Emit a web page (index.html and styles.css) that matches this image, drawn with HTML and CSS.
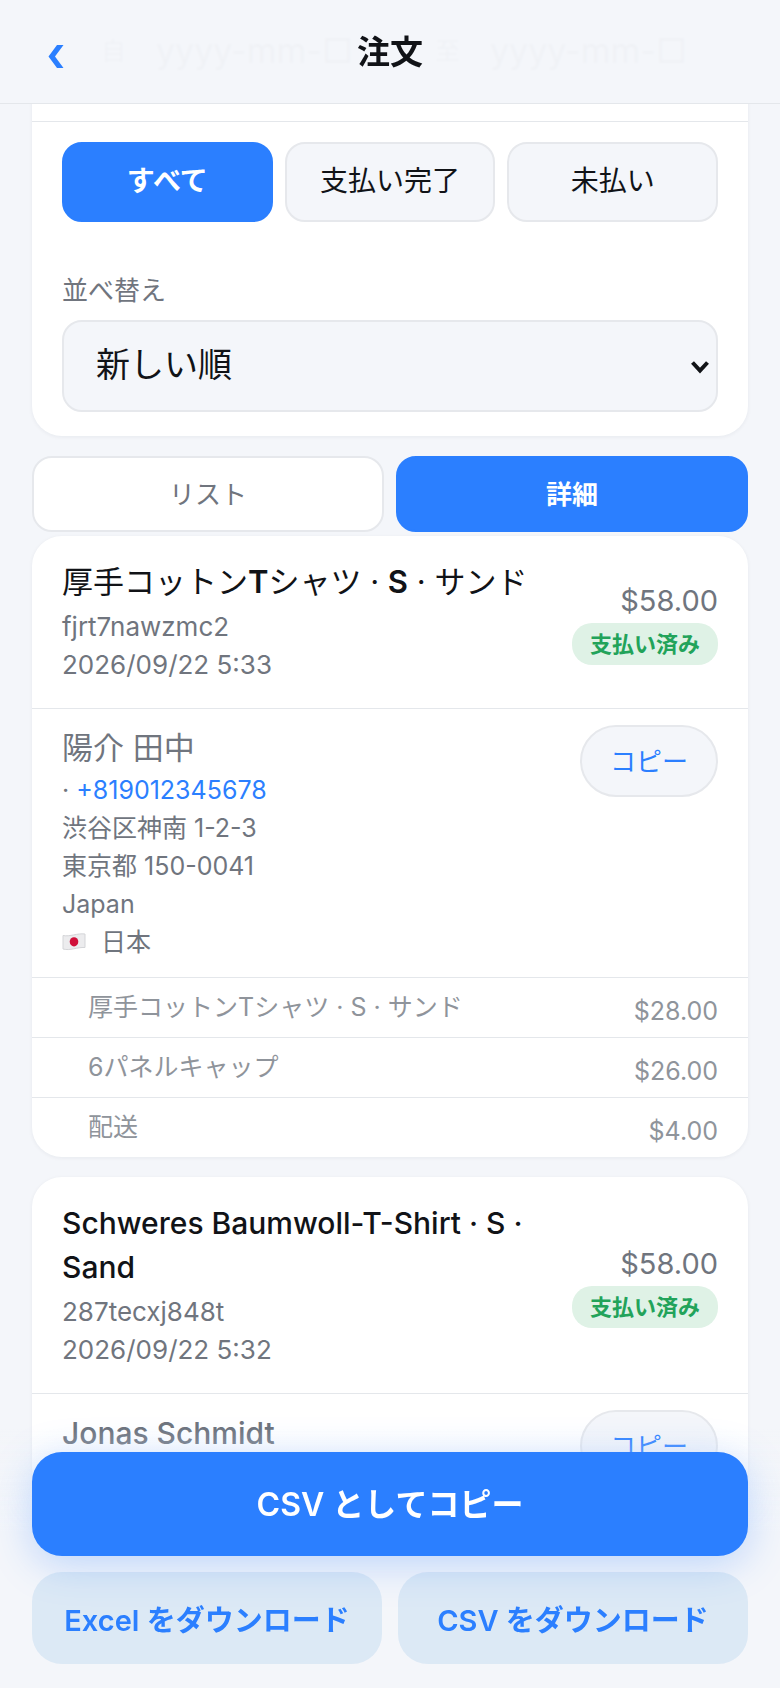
FILE: index.html
```html
<!DOCTYPE html>
<html lang="ja">
<head>
  <meta charset="UTF-8">
  <title>注文</title>
  <meta name="viewport" content="width=device-width, initial-scale=1.0">
  <link rel="stylesheet" href="styles.css">
</head>
<body>

<header class="topbar">
  <button type="button" class="back" aria-label="戻る">
    <svg width="16" height="24" viewBox="0 0 16 24"><path d="M9 0H15.5L7 11.5L15.5 23H9L0.5 11.5Z" fill="currentColor"/></svg>
  </button>
  <h1>注文</h1>
</header>

<main class="page">

  <section class="card filters">
    <div class="date-row">
      <label for="from">自</label>
      <input type="text" id="from" placeholder="yyyy-mm-□">
      <label for="to">至</label>
      <input type="text" id="to" placeholder="yyyy-mm-□">
    </div>
    <div class="filter-body">
      <div class="segments">
        <button type="button" class="segment active">すべて</button>
        <button type="button" class="segment">支払い完了</button>
        <button type="button" class="segment">未払い</button>
      </div>
      <label class="sort-label" for="sort">並べ替え</label>
      <div class="select-wrap">
        <select id="sort">
          <option>新しい順</option>
          <option>古い順</option>
        </select>
        <svg class="chevron" width="20" height="14" viewBox="0 0 20 14"><path d="M2.5 2.5L10 10.5L17.5 2.5" fill="none" stroke="#111317" stroke-width="4"/></svg>
      </div>
    </div>
  </section>

  <div class="tabs">
    <button type="button" class="tab">リスト</button>
    <button type="button" class="tab active">詳細</button>
  </div>

  <article class="card order">
    <div class="order-head">
      <div class="order-info">
        <h2>厚手コットン<b>T</b>シャツ · <b>S</b> · サンド</h2>
        <p>fjrt7nawzmc2</p>
        <p>2026/09/22 5:33</p>
      </div>
      <div class="order-total">
        <span class="price">$58.00</span>
        <span class="badge">支払い済み</span>
      </div>
    </div>
    <div class="customer">
      <div class="address">
        <h3>陽介 田中</h3>
        <p>· <a href="tel:+819012345678">+819012345678</a></p>
        <p>渋谷区神南 1-2-3</p>
        <p>東京都 150-0041</p>
        <p>Japan</p>
        <p class="country">
          <svg width="24" height="18" viewBox="0 0 24 18">
            <path d="M1 2.5C8 4 15 0 23 1V14.5C15 14 8 18 1 16Z" fill="#ececee" stroke="#d4d5d8" stroke-width="1"/>
            <ellipse cx="12" cy="8.8" rx="4.3" ry="4.6" fill="#d0103a"/>
          </svg>
          日本
        </p>
      </div>
      <button type="button" class="copy">コピー</button>
    </div>
    <ul class="items">
      <li><span>厚手コットンTシャツ · S · サンド</span><span class="item-price">$28.00</span></li>
      <li><span>6パネルキャップ</span><span class="item-price">$26.00</span></li>
      <li><span>配送</span><span class="item-price">$4.00</span></li>
    </ul>
  </article>

  <article class="card order">
    <div class="order-head">
      <div class="order-info">
        <h2 lang="de">Schweres Baumwoll-T-Shirt · S · Sand</h2>
        <p>287tecxj848t</p>
        <p>2026/09/22 5:32</p>
      </div>
      <div class="order-total">
        <span class="price">$58.00</span>
        <span class="badge">支払い済み</span>
      </div>
    </div>
    <div class="customer">
      <div class="address">
        <h3 lang="de">Jonas Schmidt</h3>
      </div>
      <button type="button" class="copy">コピー</button>
    </div>
  </article>

</main>

<footer class="actions">
  <button type="button" class="btn btn-primary">CSV としてコピー</button>
  <div class="btn-row">
    <button type="button" class="btn btn-soft">Excel をダウンロード</button>
    <button type="button" class="btn btn-soft">CSV をダウンロード</button>
  </div>
</footer>

</body>
</html>
```
FILE: styles.css
```css
* { box-sizing: border-box; }

body {
  margin: 0;
  background: #f4f6fa;
  color: #111317;
  font-family: Inter, "Noto Sans CJK JP", sans-serif;
  font-size: 25px;
  line-height: 38px;
}

h1, h2, h3, p, ul { margin: 0; padding: 0; }

button, input, select {
  font-family: inherit;
  color: inherit;
}

button { cursor: pointer; }

/* Header */
.topbar {
  position: fixed;
  top: 0;
  left: 0;
  right: 0;
  z-index: 10;
  display: grid;
  grid-template-columns: 60px 1fr 60px;
  align-items: center;
  height: 104px;
  padding: 0 24px;
  background: rgba(244, 246, 250, 0.97);
  backdrop-filter: blur(1px);
  border-bottom: 1px solid #e4e7eb;
}

.topbar h1 {
  font-size: 33px;
  font-weight: 600;
  text-align: center;
}

.back {
  display: flex;
  padding: 10px 20px 0 24px;
  border: none;
  background: none;
  color: #2b7fff;
}

.page { padding: 0 32px 240px; }

.card {
  background: #fff;
  border-radius: 30px;
  box-shadow: 0 1px 4px rgba(20, 30, 50, 0.06);
  overflow: hidden;
}

/* Filters */
.filters { border-radius: 0 0 30px 30px; }

.date-row {
  display: grid;
  grid-template-columns: 64px 1fr 64px 1fr;
  align-items: center;
  gap: 12px;
  height: 122px;
  padding: 0 30px 20px;
  border-bottom: 1px solid #e4e7eb;
  color: #70757e;
}

.date-row label { text-align: right; }

.date-row input {
  min-width: 0;
  height: 92px;
  padding: 0 16px;
  border: 2px solid #e6e8ec;
  border-radius: 20px;
  background: #f3f5fa;
  font-size: 34px;
}

.filter-body { padding: 20px 30px 24px; }

.segments {
  display: grid;
  grid-template-columns: repeat(3, 1fr);
  gap: 12px;
}

.segment, .tab {
  padding: 0 0 6px;
  border: 2px solid #e6e8ec;
  border-radius: 20px;
  background: #f4f6fa;
}

.segment {
  height: 80px;
  font-size: 28px;
}

.segment.active, .tab.active {
  border-color: #2b7fff;
  background: #2b7fff;
  color: #fff;
  font-weight: 600;
}

.sort-label {
  display: block;
  margin: 50px 0 10px;
  font-size: 26px;
  color: #70757e;
}

.select-wrap { position: relative; }

.select-wrap select {
  appearance: none;
  display: block;
  width: 100%;
  height: 92px;
  padding: 0 32px 4px;
  border: 2px solid #e6e8ec;
  border-radius: 20px;
  background: #f4f6fa;
  font-size: 34px;
}

.chevron {
  position: absolute;
  top: 40px;
  right: 8px;
  pointer-events: none;
}

/* List / detail switch */
.tabs {
  display: grid;
  grid-template-columns: 1fr 1fr;
  gap: 12px;
  margin: 20px 0 4px;
}

.tab {
  height: 76px;
  padding: 0 0 4px;
  background: #fff;
  font-size: 26px;
  color: #70757e;
}

/* Orders */
.order { margin-bottom: 20px; }

.order-head {
  display: flex;
  align-items: center;
  justify-content: space-between;
  gap: 40px;
  padding: 24px 30px;
  color: #70757e;
}

.order-info h2 {
  margin-bottom: 4px;
  font-size: 31px;
  line-height: 44px;
  font-weight: 400;
  color: #111317;
}

.order-info b { font-weight: 600; }

.order-info p { font-size: 26px; }

.order-info h2:lang(de), .address h3:lang(de) {
  font-size: 30px;
  font-weight: 500;
}

.order-total {
  display: flex;
  flex-direction: column;
  align-items: flex-end;
  flex-shrink: 0;
}

.price {
  font-size: 29px;
  line-height: 44px;
}

.badge {
  padding: 0 18px;
  border-radius: 20px;
  background: #dff2e6;
  color: #22a35a;
  font-size: 22px;
  line-height: 42px;
  font-weight: 600;
}

.customer {
  display: flex;
  align-items: flex-start;
  justify-content: space-between;
  padding: 16px 30px;
  border-top: 1px solid #e4e7eb;
  color: #70757e;
}

.address h3 {
  font-size: 31px;
  line-height: 46px;
  font-weight: 400;
}

.address a {
  color: #2b7fff;
  text-decoration: none;
}

.country {
  display: flex;
  align-items: center;
  gap: 15px;
}

.copy {
  height: 72px;
  padding: 0 28px 4px;
  border: 2px solid #e6e8ec;
  border-radius: 36px;
  background: #f4f6fa;
  color: #2b7fff;
  font-size: 26px;
}

.items { list-style: none; }

.items li {
  display: flex;
  justify-content: space-between;
  height: 60px;
  padding: 10px 30px 0 56px;
  border-top: 1px solid #e4e7eb;
  color: #8f949b;
}

.item-price { padding-top: 4px; }

/* Bottom actions */
.actions {
  position: fixed;
  left: 0;
  right: 0;
  bottom: 0;
  z-index: 10;
  padding: 24px 32px;
  background: linear-gradient(rgba(244, 246, 250, 0), #f4f6fa 40%);
}

.btn {
  width: 100%;
  border: none;
  border-radius: 30px;
  font-weight: 600;
}

.btn-primary {
  height: 104px;
  padding: 0 0 4px;
  background: #2b7fff;
  box-shadow: 0 8px 40px rgba(43, 127, 255, 0.28);
  color: #fff;
  font-size: 32px;
}

.btn-row {
  display: grid;
  grid-template-columns: 1fr 1fr;
  gap: 16px;
  margin-top: 16px;
}

.btn-soft {
  height: 92px;
  padding: 0;
  background: rgba(50, 138, 217, 0.12);
  color: #2b7fff;
  font-size: 29px;
}
```
